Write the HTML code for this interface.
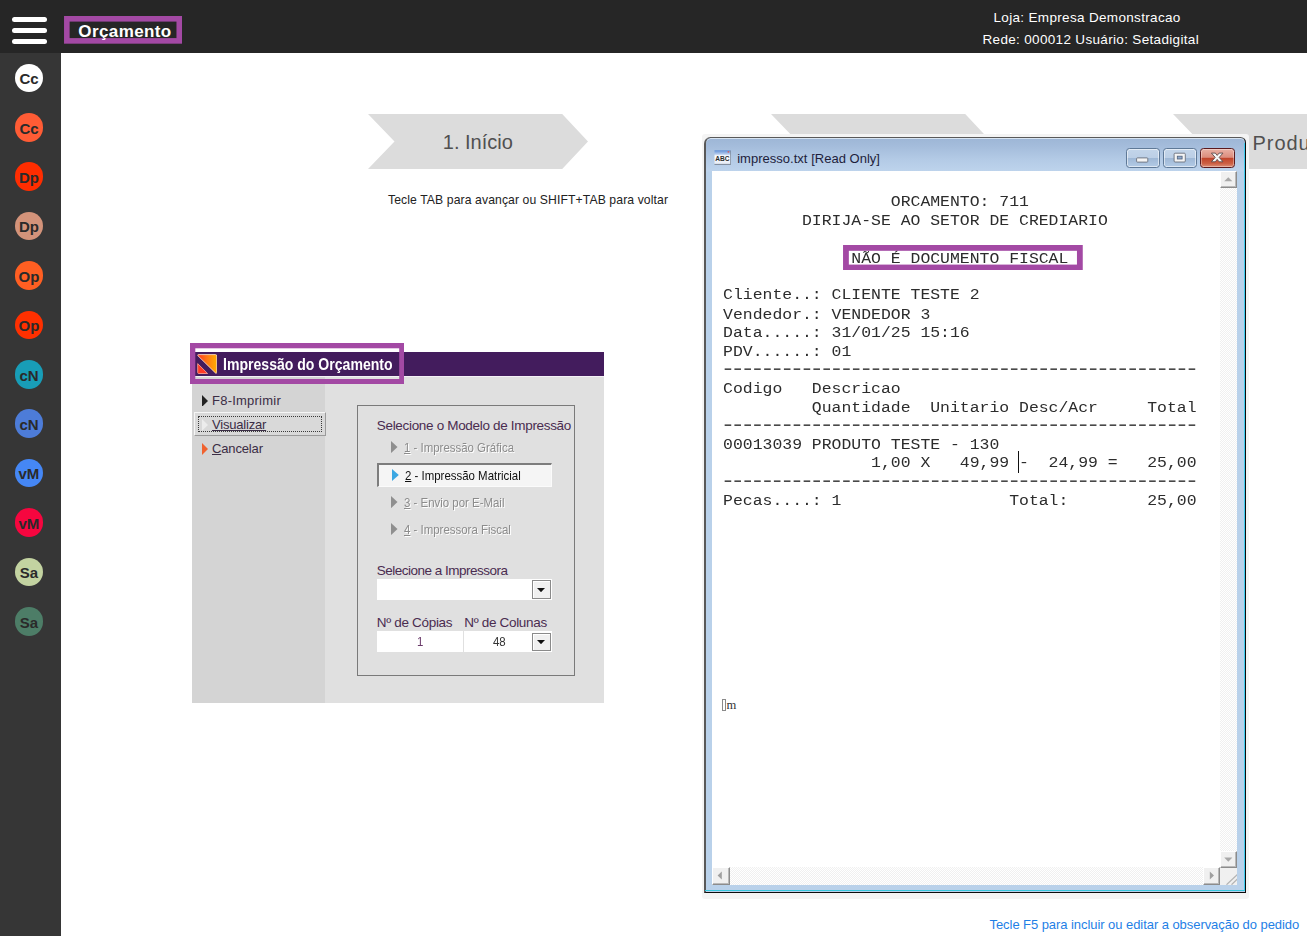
<!DOCTYPE html>
<html lang="pt-BR">
<head>
<meta charset="utf-8">
<title>Orçamento</title>
<style>
*{box-sizing:border-box;margin:0;padding:0}
html,body{width:1307px;height:936px;overflow:hidden;background:#fff}
body{position:relative;font-family:"Liberation Sans",sans-serif;color:#222}
.abs{position:absolute;white-space:nowrap}
/* header + sidebar */
#hdr{left:0;top:0;width:1307px;height:52.5px;background:#262626}
#side{left:0;top:52.5px;width:61px;height:884px;background:#363636}
.bar{left:12px;width:34.5px;height:5px;border-radius:2.5px;background:#fff}
.dot{left:14.6px;width:28.7px;height:28.7px;padding-top:.7px;border-radius:50%;text-align:center;font-weight:bold;font-size:15px;line-height:29px;color:#2a2a2a;letter-spacing:-0.1px}
#ttlbox{left:64px;top:16.4px;width:118.1px;height:27.7px;border:5.5px solid #a349a4}
#ttl{left:78.3px;top:22.2px;font-weight:bold;font-size:17px;line-height:20px;color:#fff;letter-spacing:0.4px}
.hr{color:#fff;font-size:13.5px;line-height:16px;letter-spacing:0.33px}
/* stepper */
.step{top:114px;width:220px;height:55px}
#s1t{left:442.8px;top:130.3px;font-size:20px;line-height:24px;color:#505050}
#hint{left:388px;top:193px;font-size:12.2px;line-height:15px;color:#222;letter-spacing:0.1px}
#foot{left:989.5px;top:916.8px;font-size:13px;line-height:15px;color:#1f7fe6;letter-spacing:-0.06px}

/* dialog */
#dlg{left:192.2px;top:352px;width:412px;height:350.7px;background:#e0e0e0}
#dlgbar{left:192.2px;top:352px;width:412px;height:23.5px;background:#431c5d}
#dlgline{left:192.2px;top:375.5px;width:412px;height:1.5px;background:#f4f0f6}
#dlgleft{left:192.2px;top:377px;width:133.3px;height:325.7px;background:#d4d4d4}
#dlghl{left:189.8px;top:342.8px;width:214.5px;height:41.3px;border:5.2px solid #a349a4}
#dlgt{left:223px;top:354.9px;font-weight:bold;font-size:15.6px;line-height:20px;color:#fff;transform-origin:0 0;transform:scaleX(.902)}
.mi{font-size:13px;line-height:16px;color:#3b2d45}
.tri{width:0;height:0;border-style:solid;border-color:transparent}
#grp{left:357.3px;top:404.5px;width:217.6px;height:271.6px;border:1px solid #7a7a7a}
.lbl{font-size:13.5px;line-height:16px;color:#4a2c50;letter-spacing:-0.32px}
.opt{font-size:13px;line-height:15px;color:#8c8c8c;text-shadow:1px 1px 0 #fff;transform-origin:0 50%;transform:scaleX(.88)}
.inp{background:#fff}
.cbtn{background:#f0f0f0;border:1px solid #8a8a8a;box-shadow:inset 1px 1px 0 #fff}

/* window */
#wsh{left:702px;top:134px;width:546.6px;height:764.7px;background:#f4f4f4;border-radius:3px}
#win{left:703.5px;top:137px;width:542.6px;height:756px;border-radius:6.5px 5.5px 0 0;background:linear-gradient(#9db6d6 0,#a4bcdb 8px,#b4cbe6 22px,#bdd3ec 33px,#b9d1ea 34px);border:solid;border-width:1.6px 1.5px 1.7px 2px;border-color:#5a5a5a #0c0c0c #0c0c0c #585858;box-shadow:inset 0 1px 0 #d7e4f2}
#wcy{left:705px;top:890.2px;width:540px;height:1.2px;background:#35c6dd}
#wcl{left:712px;top:171px;width:525.3px;height:713.7px;background:#fff}
#wtt{left:737.2px;top:151.3px;font-size:13px;line-height:16px;color:#1e1e3c;letter-spacing:0.02px}
.wb{top:148.4px;width:34.3px;height:19.5px;border-radius:3.5px;border:1px solid #5f7997;box-shadow:inset 0 0 0 1px rgba(255,255,255,.55);background:linear-gradient(#c3d5ea 0,#bccfe6 48%,#9fb8d6 52%,#b3cbe6 100%)}
#wbx{border-color:#5b1a1e;background:linear-gradient(#e9b1a5 0,#dc8d7d 46%,#c1452c 52%,#cc5f43 80%,#dc8e78 100%);box-shadow:inset 0 0 0 1px rgba(255,255,255,.35)}
.sb{background:#f0f0f0;border:1px solid;border-color:#fff #8c8c8c #8c8c8c #fff;box-shadow:inset -1px -1px 0 #b9b9b9}
.trk{background:repeating-conic-gradient(#fff 0 25%,#f0f0f0 0 50%) 0 0/2px 2px}
#rcpt{left:723.1px;top:174.6px;font-family:"Liberation Mono",monospace;font-size:16.45px;line-height:21.414px;color:#2c2c2c;white-space:pre;transform-origin:0 0;transform:scaleY(.87)}
#rcpt i{font-style:normal;color:#484848;font-size:24px;letter-spacing:-4.53px;line-height:0;position:relative;left:-2.4px;top:1px}
</style>
</head>
<body>
<div id="hdr" class="abs"></div>
<div id="side" class="abs"></div>
<div class="abs bar" style="top:17.3px"></div>
<div class="abs bar" style="top:28.3px"></div>
<div class="abs bar" style="top:39.3px"></div>
<svg class="abs" style="left:64px;top:16.4px;width:118.1px;height:27.7px" viewBox="0 0 118.1 27.7"><rect x="2.8" y="2.8" width="112.5" height="22.1" fill="none" stroke="#a349a4" stroke-width="5.6"/></svg>
<div id="ttl" class="abs">Orçamento</div>
<div id="h1" class="abs hr" style="left:993.5px;top:9.6px">Loja: Empresa Demonstracao</div>
<div id="h2" class="abs hr" style="left:982.5px;top:31.6px">Rede: 000012 Usuário: Setadigital</div>

<div class="abs dot" style="top:63.5px;background:#fff">Cc</div>
<div class="abs dot" style="top:112.9px;background:#ff5c35">Cc</div>
<div class="abs dot" style="top:162.3px;background:#ff2d00">Dp</div>
<div class="abs dot" style="top:211.7px;background:#d3937a">Dp</div>
<div class="abs dot" style="top:261.1px;background:#ff5f22">Op</div>
<div class="abs dot" style="top:310.5px;background:#ff3000">Op</div>
<div class="abs dot" style="top:359.9px;background:#189db7">cN</div>
<div class="abs dot" style="top:409.3px;background:#4d7cd8">cN</div>
<div class="abs dot" style="top:458.7px;background:#4587f5">vM</div>
<div class="abs dot" style="top:508.1px;background:#f6063f">vM</div>
<div class="abs dot" style="top:557.5px;background:#c3d3a1">Sa</div>
<div class="abs dot" style="top:606.9px;background:#4d7d67">Sa</div>

<!-- stepper arrows -->
<svg class="abs step" style="left:368.2px" viewBox="0 0 220 55"><polygon points="0,0 194.2,0 220,27.5 194.2,55 0,55 26.5,27.5" fill="#dcdcdc"/></svg>
<svg class="abs step" style="left:770.6px" viewBox="0 0 220 55"><polygon points="0,0 194.2,0 220,27.5 194.2,55 0,55 26.5,27.5" fill="#dcdcdc"/></svg>
<svg class="abs step" style="left:1172.9px" viewBox="0 0 220 55"><polygon points="0,0 194.2,0 220,27.5 194.2,55 0,55 26.5,27.5" fill="#dcdcdc"/></svg>
<div id="s1t" class="abs">1. Início</div>
<div id="s3t" class="abs" style="left:1252.6px;top:130.8px;font-size:20px;line-height:24px;color:#505050;letter-spacing:.9px">Produtos</div>
<div id="hint" class="abs">Tecle TAB para avançar ou SHIFT+TAB para voltar</div>
<div id="foot" class="abs">Tecle F5 para incluir ou editar a observação do pedido</div>


<div id="dlg" class="abs"></div>
<div id="dlgbar" class="abs"></div>
<div id="dlgline" class="abs"></div>
<div id="dlgleft" class="abs"></div>
<svg class="abs" style="left:189.8px;top:342.8px;width:214.5px;height:41.3px" viewBox="0 0 214.5 41.3"><rect x="2.65" y="2.65" width="209.2" height="36.0" fill="none" stroke="#a349a4" stroke-width="5.3"/></svg>
<svg class="abs" style="left:197px;top:354px;width:20.4px;height:20px" viewBox="0 0 20.4 20">
<defs><linearGradient id="ig" x1="0" y1="0" x2="1" y2="0"><stop offset="0" stop-color="#ff3a1c"/><stop offset="0.5" stop-color="#ff7a14"/><stop offset="1" stop-color="#ffae00"/></linearGradient></defs>
<path d="M1.2 0.6H18.4Q19.8 0.6 19.8 2V18.6Q19.6 19.8 18.4 18.9L0.9 1.7Q0.4 0.7 1.2 0.6Z" fill="url(#ig)" stroke="#ffe9d6" stroke-width=".8" stroke-linejoin="round"/>
<path d="M0.7 9.6V18.6Q0.7 19.5 1.6 19.5H10.6Z" fill="#ff3b25" stroke="#ffab9d" stroke-width=".8" stroke-linejoin="round"/>
</svg>
<div id="dlgt" class="abs">Impressão do Orçamento</div>

<svg class="abs" style="left:201.9px;top:394.7px;width:6px;height:11.8px" viewBox="0 0 6 11.8"><polygon points="0,0 6,5.9 0,11.8" fill="#222"/></svg>
<div id="m1" class="abs mi" style="left:212px;top:392.5px;letter-spacing:.23px">F8-Imprimir</div>
<div class="abs" style="left:194px;top:412.4px;width:131.6px;height:23.6px;background:#d9d9d9;border:1px solid;border-color:#f6f6f6 #9a9a9a #9a9a9a #f6f6f6"></div>
<div class="abs" style="left:198.2px;top:416.3px;width:123.8px;height:15.5px;border:1px dotted #3a3a3a"></div>
<svg class="abs" style="left:201.9px;top:419.1px;width:6px;height:11.8px" viewBox="0 0 6 11.8"><polygon points="0,0 6,5.9 0,11.8" fill="#ececec"/></svg>
<div id="m2" class="abs mi" style="left:212px;top:417px;text-decoration:underline;letter-spacing:-.2px">Visualizar</div>
<svg class="abs" style="left:201.9px;top:443.2px;width:6px;height:11.9px" viewBox="0 0 6 11.9"><polygon points="0,0 6,5.95 0,11.9" fill="#f0622f"/></svg>
<div id="m3" class="abs mi" style="left:212px;top:441.4px;letter-spacing:-.15px"><u>C</u>ancelar</div>

<div id="grp" class="abs"></div>
<div id="l1" class="abs lbl" style="left:376.8px;top:418.3px">Selecione o Modelo de Impressão</div>
<svg class="abs" style="left:391.1px;top:440.9px;width:6.5px;height:12.1px" viewBox="0 0 6.5 12.1"><polygon points="0,0 6.5,6.05 0,12.1" fill="#8f8f8f"/></svg>
<div id="o1" class="abs opt" style="left:404px;top:440px"><u>1</u> - Impressão Gráfica</div>
<div class="abs" style="left:376.8px;top:462.6px;width:175.7px;height:24.3px;background:#f5f5f5;border:solid;border-width:2px 1px 1px 2px;border-color:#7d7d7d #fbfbfb #fbfbfb #7d7d7d"></div>
<svg class="abs" style="left:391.8px;top:469.2px;width:6.8px;height:12px" viewBox="0 0 6.8 12"><polygon points="0,0 6.8,6.0 0,12" fill="#3ba7e2"/></svg>
<div id="o2" class="abs opt" style="left:404.5px;top:467.7px;color:#111;text-shadow:none"><u>2</u> - Impressão Matricial</div>
<svg class="abs" style="left:391.1px;top:495.5px;width:6.5px;height:12.2px" viewBox="0 0 6.5 12.2"><polygon points="0,0 6.5,6.1 0,12.2" fill="#8f8f8f"/></svg>
<div id="o3" class="abs opt" style="left:404px;top:494.7px"><u>3</u> - Envio por E-Mail</div>
<svg class="abs" style="left:391.1px;top:523px;width:6.5px;height:12.1px" viewBox="0 0 6.5 12.1"><polygon points="0,0 6.5,6.05 0,12.1" fill="#8f8f8f"/></svg>
<div id="o4" class="abs opt" style="left:404px;top:521.9px"><u>4</u> - Impressora Fiscal</div>

<div id="l2" class="abs lbl" style="left:376.8px;top:563.4px;letter-spacing:-.5px">Selecione a Impressora</div>
<div class="abs inp" style="left:376.8px;top:578.8px;width:175.7px;height:21.3px"></div>
<div class="abs cbtn" style="left:532px;top:580.2px;width:18.5px;height:18.5px"></div>
<svg class="abs" style="left:537.2px;top:587.8px;width:8.0px;height:4.2px" viewBox="0 0 8.0 4.2"><polygon points="0,0 8.0,0 4.0,4.2" fill="#111"/></svg>
<div id="l3" class="abs lbl" style="left:376.8px;top:615.1px">Nº de Cópias</div>
<div id="l4" class="abs lbl" style="left:464.3px;top:615.1px">Nº de Colunas</div>
<div class="abs inp" style="left:376.8px;top:630.6px;width:86.5px;height:21.3px"></div>
<div class="abs inp" style="left:464.3px;top:630.6px;width:88.2px;height:21.3px"></div>
<div id="v1" class="abs opt" style="left:416.5px;top:633.5px;color:#6a3a6a;text-shadow:none">1</div>
<div id="v2" class="abs opt" style="left:492.5px;top:633.5px;color:#333;text-shadow:none">48</div>
<div class="abs cbtn" style="left:532px;top:632.6px;width:18.5px;height:18px"></div>
<svg class="abs" style="left:537.2px;top:640.0px;width:8.0px;height:4.2px" viewBox="0 0 8.0 4.2"><polygon points="0,0 8.0,0 4.0,4.2" fill="#111"/></svg>
<!--DIALOG-->

<div id="wsh" class="abs"></div>
<div id="win" class="abs"></div>
<div id="wcy" class="abs"></div>
<div class="abs" style="left:1243.6px;top:143px;width:1.2px;height:748.4px;background:#3fcdf0"></div>
<div id="wcl" class="abs"></div>
<svg class="abs" style="left:713.8px;top:150.2px;width:17.2px;height:14.8px" viewBox="0 0 17 15">
<defs><linearGradient id="abg" x1="0" y1="0" x2="0" y2="1"><stop offset="0" stop-color="#5e8fd6"/><stop offset=".28" stop-color="#b7cdee"/><stop offset=".4" stop-color="#fff"/><stop offset="1" stop-color="#e6ecf6"/></linearGradient></defs>
<rect x=".3" y=".3" width="16.2" height="14" fill="url(#abg)"/>
<path d="M.3 14.6H16.8V.6" fill="none" stroke="#7c8796" stroke-width="1"/>
<rect x="13.6" y="1.2" width="1.6" height="1.4" fill="#e05858"/>
<text x="8.4" y="11.2" text-anchor="middle" font-family="Liberation Sans, sans-serif" font-weight="bold" font-size="6.6" fill="#2b2b2b" textLength="14.5" lengthAdjust="spacingAndGlyphs">ABC</text>
</svg>
<div id="wtt" class="abs">impresso.txt [Read Only]</div>
<div class="abs wb" style="left:1125.5px"></div>
<div class="abs wb" style="left:1162.8px"></div>
<div id="wbx" class="abs wb" style="left:1200.2px;width:34.8px"></div>
<svg class="abs" style="left:1125.5px;top:148.4px;width:110px;height:19.5px" viewBox="0 0 110 19.5">
<rect x="10.6" y="9.9" width="11.2" height="4.2" rx=".8" fill="#f4f4f4" stroke="#6a6f7a" stroke-width=".9"/>
<rect x="48.1" y="5.2" width="11.2" height="8.8" rx="1" fill="#f4f4f4" stroke="#6a6f7a" stroke-width=".9"/>
<rect x="51.3" y="8.2" width="4.8" height="2.8" fill="#8fa9cc" stroke="#4f607a" stroke-width=".8"/>
<path d="M85.4 5.1h3.9l1.9 2.3 1.9-2.3h3.9l-3.8 4.3 3.8 4.4h-3.9l-1.9-2.4-1.9 2.4h-3.9l3.8-4.4z" fill="#f6f6f6" stroke="#5e4a4a" stroke-width=".9" stroke-linejoin="round"/>
</svg>
<!-- scrollbars -->
<div class="abs trk" style="left:1219.6px;top:171px;width:17.5px;height:696.3px"></div>
<div class="abs trk" style="left:712px;top:867px;width:508px;height:17.7px"></div>
<div class="abs" style="left:1219.6px;top:867px;width:17.5px;height:17.7px;background:#f0f0f0"></div>
<div class="abs sb" style="left:1219.6px;top:171.3px;width:17.5px;height:17px"></div>
<div class="abs sb" style="left:1219.6px;top:850.6px;width:17.5px;height:17px"></div>
<div class="abs sb" style="left:712px;top:867.3px;width:17.6px;height:17.4px"></div>
<div class="abs sb" style="left:1203px;top:867.3px;width:17.4px;height:17.4px"></div>
<svg class="abs" style="left:1219.6px;top:171.3px;width:17.5px;height:17px" viewBox="0 0 17.5 17"><polygon points="4.2,10.2 12.4,10.2 8.3,6.2" fill="#a8a8a8"/></svg>
<svg class="abs" style="left:1219.6px;top:850.6px;width:17.5px;height:17px" viewBox="0 0 17.5 17"><polygon points="4.2,6.6 12.4,6.6 8.3,10.8" fill="#a8a8a8"/></svg>
<svg class="abs" style="left:712px;top:867.3px;width:17.6px;height:17.4px" viewBox="0 0 17.6 17.4"><polygon points="9.8,4.4 9.8,12.4 5.6,8.4" fill="#a0a0a0"/></svg>
<svg class="abs" style="left:1203px;top:867.3px;width:17.4px;height:17.4px" viewBox="0 0 17.4 17.4"><polygon points="6.8,4.4 6.8,12.4 11,8.4" fill="#a0a0a0"/></svg>
<svg class="abs" style="left:1219.6px;top:867px;width:17.5px;height:17.7px" viewBox="0 0 17.5 17.7"><path d="M6.5 17.7L17.5 7.4M11.5 17.7L17.5 12" stroke="#b4b4b4" stroke-width="1.3" fill="none"/></svg>
<pre id="rcpt" class="abs">

                 ORCAMENTO: 711
        DIRIJA-SE AO SETOR DE CREDIARIO

             NÃO É DOCUMENTO FISCAL

Cliente..: CLIENTE TESTE 2
Vendedor.: VENDEDOR 3
Data.....: 31/01/25 15:16
PDV......: 01
<i>------------------------------------------------</i>
Codigo   Descricao
         Quantidade  Unitario Desc/Acr     Total
<i>------------------------------------------------</i>
00013039 PRODUTO TESTE - 130
               1,00 X   49,99 -  24,99 =   25,00
<i>------------------------------------------------</i>
Pecas....: 1                 Total:        25,00</pre>
<svg class="abs" style="left:843.3px;top:244.8px;width:239.8px;height:25.4px" viewBox="0 0 239.8 25.4"><rect x="2.9" y="2.9" width="234.0" height="19.599999999999998" fill="none" stroke="#a349a4" stroke-width="5.8"/></svg>
<div class="abs" style="left:1018px;top:451px;width:1.2px;height:22px;background:#111"></div>
<div class="abs" style="left:722.3px;top:699px;width:4.2px;height:11.8px;border:1px solid #8a8a8a"></div>
<div id="esc" class="abs" style="left:726.6px;top:697.5px;font-family:'Liberation Serif',serif;font-size:12.6px;line-height:14px;color:#333">m</div>

</body>
</html>
